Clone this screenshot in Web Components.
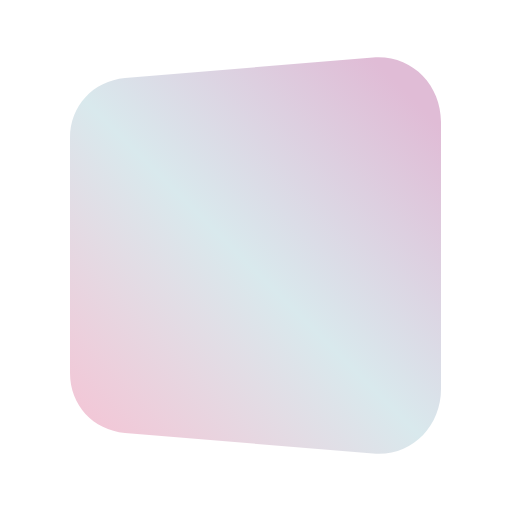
<!DOCTYPE html>
<html>
<head>
<meta charset="utf-8">
<title>Gradient tile</title>
<style>
  html, body { margin: 0; height: 100%; background: #fff; }
</style>
</head>
<body>
<gradient-tile></gradient-tile>
<script>
class GradientTile extends HTMLElement {
    constructor() {
        super();
        this.attachShadow({ mode: 'open' });
        this.shadowRoot.innerHTML = `
            <style>
                :host {
                    display: flex;
                    width: 512px;
                    height: 512px;
                    justify-content: center;
                    align-items: center;
                }
                svg {
                    display: block;
                    width: 512px;
                    height: 512px;
                }
            </style>
            <svg viewBox="0 0 512 512" xmlns="http://www.w3.org/2000/svg">
                <defs>
                    <linearGradient id="sheen" gradientUnits="userSpaceOnUse" x1="90" y1="436" x2="420" y2="106">
                        <stop offset="0" stop-color="#f3c6d6"/>
                        <stop offset="0.5" stop-color="#d9e9ed"/>
                        <stop offset="1" stop-color="#e0bcd6"/>
                    </linearGradient>
                </defs>
                <path fill="url(#sheen)" d="M125 78 L373 57.5 C411 54.5 441 84 441 122 L441 389 C441 427 411 457 373 453.5 L125 433 C93 430 70 405 70 373 L70 138 C70 106 93 81 125 78 Z"/>
            </svg>
        `;
    }
}

customElements.define('gradient-tile', GradientTile);
</script>
</body>
</html>
